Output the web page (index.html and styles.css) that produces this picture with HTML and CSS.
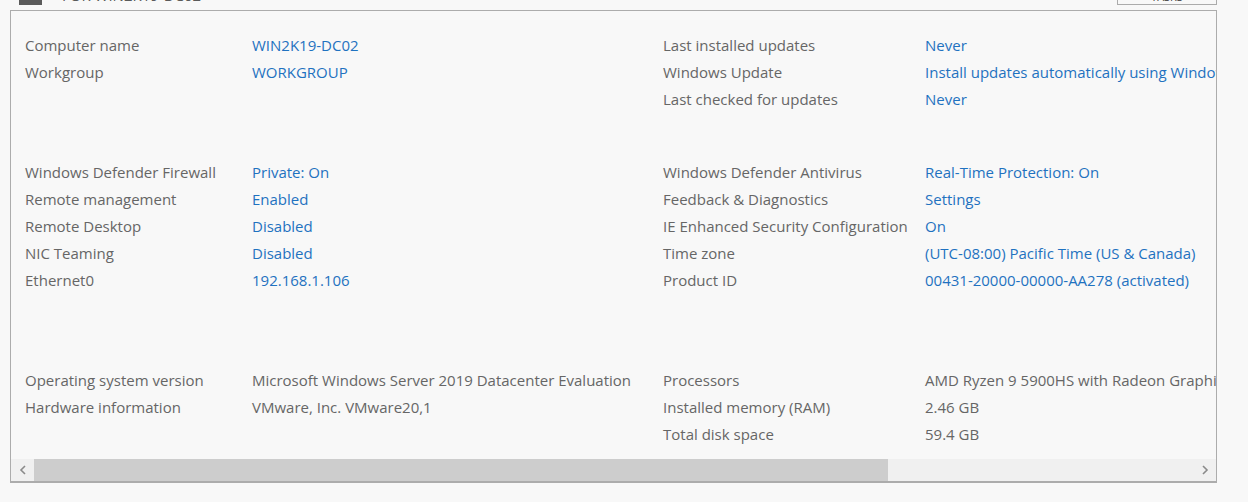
FILE: index.html
```html
<!DOCTYPE html>
<html>
<head>
<meta charset="utf-8">
<link rel="stylesheet" href="styles.css">
</head>
<body>
<div class="header">
  <div class="hdr-icon"></div>
  <div class="hdr-title">FOR WIN2K19-DC02</div>
  <div class="hdr-spacer"></div>
  <div class="hdr-tasks">TASKS</div>
</div>
<div class="panel">
  <div class="viewport">
    <div class="content">
      <div class="group g1">
        <div class="col">
          <div class="row"><span class="lbl">Computer name</span><span class="val link">WIN2K19-DC02</span></div>
          <div class="row"><span class="lbl">Workgroup</span><span class="val link">WORKGROUP</span></div>
        </div>
        <div class="col right">
          <div class="row"><span class="lbl">Last installed updates</span><span class="val link">Never</span></div>
          <div class="row"><span class="lbl">Windows Update</span><span class="val link">Install updates automatically using Windows Update</span></div>
          <div class="row"><span class="lbl">Last checked for updates</span><span class="val link">Never</span></div>
        </div>
      </div>
      <div class="group g2">
        <div class="col">
          <div class="row"><span class="lbl">Windows Defender Firewall</span><span class="val link">Private: On</span></div>
          <div class="row"><span class="lbl">Remote management</span><span class="val link">Enabled</span></div>
          <div class="row"><span class="lbl">Remote Desktop</span><span class="val link">Disabled</span></div>
          <div class="row"><span class="lbl">NIC Teaming</span><span class="val link">Disabled</span></div>
          <div class="row"><span class="lbl">Ethernet0</span><span class="val link">192.168.1.106</span></div>
        </div>
        <div class="col right">
          <div class="row"><span class="lbl">Windows Defender Antivirus</span><span class="val link">Real-Time Protection: On</span></div>
          <div class="row"><span class="lbl">Feedback &amp; Diagnostics</span><span class="val link">Settings</span></div>
          <div class="row"><span class="lbl">IE Enhanced Security Configuration</span><span class="val link">On</span></div>
          <div class="row"><span class="lbl">Time zone</span><span class="val link">(UTC-08:00) Pacific Time (US &amp; Canada)</span></div>
          <div class="row"><span class="lbl">Product ID</span><span class="val link">00431-20000-00000-AA278 (activated)</span></div>
        </div>
      </div>
      <div class="group g3">
        <div class="col">
          <div class="row"><span class="lbl">Operating system version</span><span class="val">Microsoft Windows Server 2019 Datacenter Evaluation</span></div>
          <div class="row"><span class="lbl">Hardware information</span><span class="val">VMware, Inc. VMware20,1</span></div>
        </div>
        <div class="col right">
          <div class="row"><span class="lbl">Processors</span><span class="val">AMD Ryzen 9 5900HS with Radeon Graphics</span></div>
          <div class="row"><span class="lbl">Installed memory (RAM)</span><span class="val">2.46 GB</span></div>
          <div class="row"><span class="lbl">Total disk space</span><span class="val">59.4 GB</span></div>
        </div>
      </div>
    </div>
  </div>
  <div class="hscroll">
    <div class="arrow">
      <svg width="8" height="10" viewBox="0 0 8 10"><path d="M6 1 L2 5 L6 9" fill="none" stroke="#8a8a8a" stroke-width="1.6"/></svg>
    </div>
    <div class="thumb"></div>
    <div class="track"></div>
    <div class="arrow">
      <svg width="8" height="10" viewBox="0 0 8 10"><path d="M2 1 L6 5 L2 9" fill="none" stroke="#8a8a8a" stroke-width="1.6"/></svg>
    </div>
  </div>
</div>
</body>
</html>
```
FILE: styles.css
```css
html, body {
  margin: 0;
  padding: 0;
  background: #f8f8f8;
  font-family: "Open Sans", "Noto Sans", sans-serif;
  font-size: 15px;
}
.header {
  height: 5px;
  overflow: hidden;
  display: flex;
  align-items: flex-end;
  padding-left: 19px;
  width: 1217px;
  box-sizing: border-box;
}
.hdr-icon {
  width: 23px;
  height: 23px;
  background: #5b5b5b;
  flex: none;
}
.hdr-title {
  margin-left: 20px;
  color: #5a5a5a;
  font-size: 15px;
  line-height: 15px;
  margin-bottom: 2px;
  height: 15px;
}
.hdr-spacer { flex: 1; }
.hdr-tasks {
  width: 100px;
  height: 22px;
  box-sizing: border-box;
  border: 1px solid #ababab;
  background: #f8f8f8;
  color: #444;
  font-size: 11px;
  text-align: center;
  line-height: 25px;
  margin-right: 0;
}
.panel {
  margin: 5px 0 0 10px;
  width: 1207px;
  height: 473px;
  box-sizing: border-box;
  border: 1px solid #acacac;
  border-bottom-width: 2px;
  background: #f8f8f8;
  display: flex;
  flex-direction: column;
}
.viewport {
  flex: 1;
  overflow: hidden;
}
.content {
  padding: 21px 0 0 14px;
  width: 1500px;
}
.group {
  display: flex;
}
.g2 { margin-top: 46px; }
.g3 { margin-top: 73px; }
.col {
  width: 638px;
  flex: none;
}
.row {
  display: flex;
  height: 27px;
  line-height: 27px;
  white-space: nowrap;
}
.lbl {
  color: #666666;
  width: 227px;
  flex: none;
}
.right .lbl { width: 262px; }
.val { color: #666666; }
.val.link { color: #1f72c0; }
.hscroll {
  height: 22px;
  display: flex;
  background: #f0f0f0;
  flex: none;
}
.arrow {
  width: 23px;
  display: flex;
  align-items: center;
  justify-content: center;
  flex: none;
}
.thumb {
  width: 854px;
  background: #cdcdcd;
  flex: none;
}
.track { flex: 1; }
```
